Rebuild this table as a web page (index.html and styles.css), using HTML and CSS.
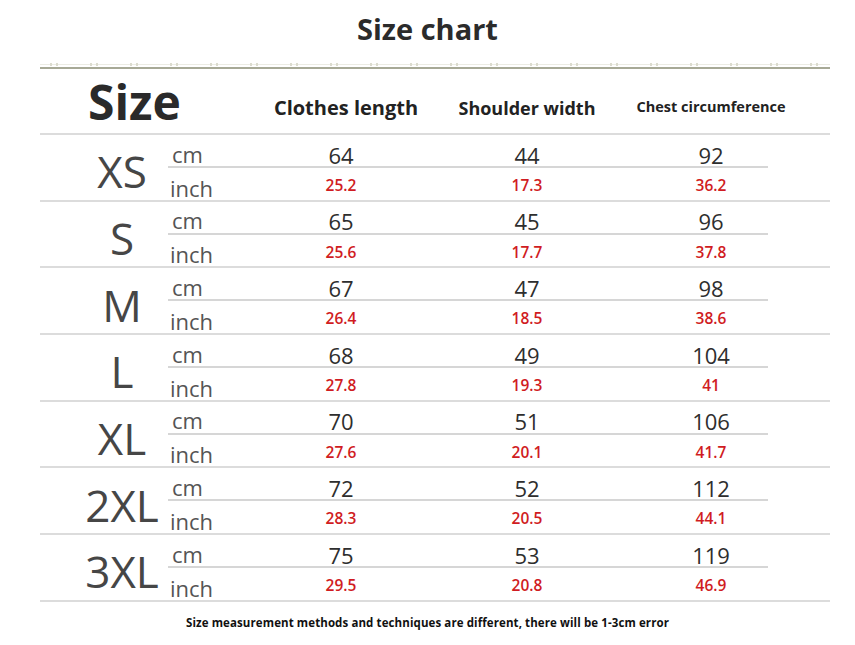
FILE: index.html
```html
<!DOCTYPE html>
<html>
<head>
<meta charset="utf-8">
<link rel="stylesheet" href="styles.css">
</head>
<body>
<div class="page">
  <h1 class="title">Size chart</h1>
  <div class="divider"></div>
  <div class="chart">
    <div class="head">
      <div class="h-size">Size</div>
      <div class="h-col h-first">Clothes length</div>
      <div class="h-col">Shoulder width</div>
      <div class="h-col h-small">Chest circumference</div>
    </div>

    <div class="row">
      <div class="label">XS</div>
      <div class="sub">
        <div class="cm"><span class="unit">cm</span><span class="v">64</span><span class="v">44</span><span class="v">92</span></div>
        <div class="inch"><span class="unit">inch</span><span class="r">25.2</span><span class="r">17.3</span><span class="r">36.2</span></div>
      </div>
    </div>
    <div class="row">
      <div class="label">S</div>
      <div class="sub">
        <div class="cm"><span class="unit">cm</span><span class="v">65</span><span class="v">45</span><span class="v">96</span></div>
        <div class="inch"><span class="unit">inch</span><span class="r">25.6</span><span class="r">17.7</span><span class="r">37.8</span></div>
      </div>
    </div>
    <div class="row">
      <div class="label">M</div>
      <div class="sub">
        <div class="cm"><span class="unit">cm</span><span class="v">67</span><span class="v">47</span><span class="v">98</span></div>
        <div class="inch"><span class="unit">inch</span><span class="r">26.4</span><span class="r">18.5</span><span class="r">38.6</span></div>
      </div>
    </div>
    <div class="row">
      <div class="label">L</div>
      <div class="sub">
        <div class="cm"><span class="unit">cm</span><span class="v">68</span><span class="v">49</span><span class="v">104</span></div>
        <div class="inch"><span class="unit">inch</span><span class="r">27.8</span><span class="r">19.3</span><span class="r">41</span></div>
      </div>
    </div>
    <div class="row">
      <div class="label">XL</div>
      <div class="sub">
        <div class="cm"><span class="unit">cm</span><span class="v">70</span><span class="v">51</span><span class="v">106</span></div>
        <div class="inch"><span class="unit">inch</span><span class="r">27.6</span><span class="r">20.1</span><span class="r">41.7</span></div>
      </div>
    </div>
    <div class="row">
      <div class="label">2XL</div>
      <div class="sub">
        <div class="cm"><span class="unit">cm</span><span class="v">72</span><span class="v">52</span><span class="v">112</span></div>
        <div class="inch"><span class="unit">inch</span><span class="r">28.3</span><span class="r">20.5</span><span class="r">44.1</span></div>
      </div>
    </div>
    <div class="row">
      <div class="label">3XL</div>
      <div class="sub">
        <div class="cm"><span class="unit">cm</span><span class="v">75</span><span class="v">53</span><span class="v">119</span></div>
        <div class="inch"><span class="unit">inch</span><span class="r">29.5</span><span class="r">20.8</span><span class="r">46.9</span></div>
      </div>
    </div>
  </div>
  <p class="note">Size measurement methods and techniques are different, there will be 1-3cm error</p>
</div>
</body>
</html>
```

FILE: styles.css
```css
html, body {
  margin: 0;
  padding: 0;
  background: #ffffff;
}

.page {
  width: 855px;
  height: 645px;
  font-family: "Open Sans", "Liberation Sans", sans-serif;
  color: #333333;
}

.title {
  margin: 0;
  height: 58px;
  padding-bottom: 4px;
  line-height: 58px;
  font-size: 29px;
  font-weight: 700;
  text-align: center;
  color: #2b2b2b;
}

.divider {
  margin-left: 40px;
  width: 790px;
  height: 8px;
  background:
    linear-gradient(#a7a996, #a7a996) no-repeat 0 5px / 100% 2px,
    repeating-linear-gradient(90deg, transparent 0 10px, #dcdccf 10px 12px, transparent 12px 16px, #dcdccf 16px 18px, transparent 18px 40px) no-repeat 0 1px / 100% 3px,
    linear-gradient(#ecece4, #ecece4) no-repeat 0 2px / 100% 1px;
}

.chart {
  margin-left: 40px;
  width: 790px;
}

.head {
  display: grid;
  grid-template-columns: 208px 186px 186px 182px;
  align-items: center;
  height: 65px;
  box-sizing: border-box;
  border-bottom: 2px solid #dcdcdc;
}

.h-size {
  padding-left: 48px;
  font-size: 48px;
  line-height: 1;
  font-weight: 700;
  color: #2a2a2a;
}

.h-col {
  padding-top: 12px;
  text-align: center;
  font-size: 18px;
  line-height: 1;
  font-weight: 700;
  color: #222222;
  white-space: nowrap;
}

.h-first {
  padding-left: 10px;
  font-size: 20px;
}

.h-small {
  font-size: 14.5px;
}

.row {
  display: flex;
  height: 66.7px;
  box-sizing: border-box;
  border-bottom: 2px solid #dcdcdc;
}

.label {
  width: 128px;
  padding-left: 36px;
  padding-top: 8px;
  box-sizing: border-box;
  display: flex;
  align-items: center;
  justify-content: center;
  font-size: 44px;
  font-weight: 500;
  color: #464646;
}

.sub {
  flex: 1;
  display: flex;
  flex-direction: column;
}

.cm, .inch {
  display: grid;
  grid-template-columns: 80px 186px 186px 182px;
  white-space: nowrap;
}

.cm {
  height: 33px;
  background: linear-gradient(#d6d6d6, #d6d6d6) no-repeat left bottom / 600px 2px;
}

.inch {
  flex: 1;
}

.unit {
  padding-left: 4px;
  font-size: 22px;
  line-height: 1;
  font-weight: 500;
  color: #555555;
}

.cm .unit {
  padding-top: 7.5px;
}

.inch .unit {
  padding-left: 2px;
  padding-top: 8.5px;
}

.v {
  padding-top: 8.5px;
  text-align: center;
  font-size: 22px;
  line-height: 1;
  font-weight: 500;
  color: #2e2e2e;
}

.r {
  padding-top: 10px;
  text-align: center;
  font-size: 15.5px;
  line-height: 1;
  font-weight: 600;
  color: #d01c22;
}

.note {
  margin: 0;
  padding-top: 15px;
  text-align: center;
  font-size: 11.5px;
  letter-spacing: 0.1px;
  line-height: 1;
  font-weight: 700;
  color: #111111;
}
```
